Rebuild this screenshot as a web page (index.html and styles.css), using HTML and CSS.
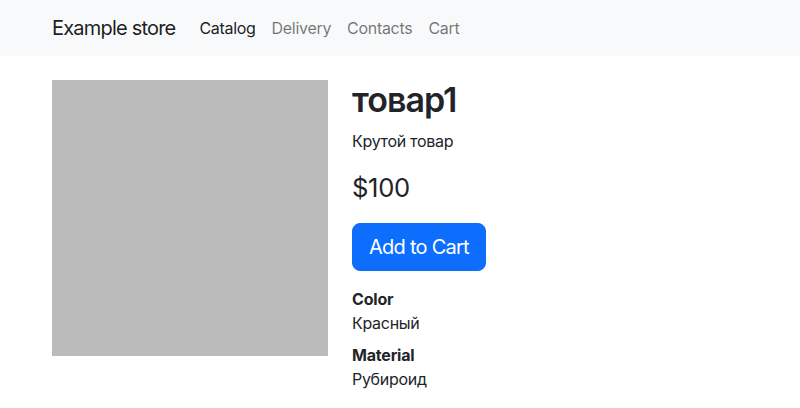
FILE: index.html
```html
<!DOCTYPE html>
<html lang="ru">
<head>
<meta charset="utf-8">
<title>Example store</title>
<link rel="stylesheet" href="styles.css">
</head>
<body>
<nav class="navbar">
  <div class="container nav-inner">
    <a class="brand" href="#">Example store</a>
    <ul class="nav">
      <li><a class="nav-link active" href="#">Catalog</a></li>
      <li><a class="nav-link" href="#">Delivery</a></li>
      <li><a class="nav-link" href="#">Contacts</a></li>
      <li><a class="nav-link" href="#">Cart</a></li>
    </ul>
  </div>
</nav>
<main class="container product">
  <div class="photo-col">
    <div class="photo"></div>
  </div>
  <div class="info-col">
    <h1 class="title">товар1</h1>
    <p class="desc">Крутой товар</p>
    <p class="price">$100</p>
    <button class="btn" type="button">Add to Cart</button>
    <dl class="props">
      <dt>Color</dt>
      <dd>Красный</dd>
      <dt>Material</dt>
      <dd>Рубироид</dd>
    </dl>
  </div>
</main>
</body>
</html>
```
FILE: styles.css
```css
* { box-sizing: border-box; }
html, body { margin: 0; padding: 0; }
body {
  font-family: Inter, "Noto Sans", "Liberation Sans", sans-serif;
  font-size: 16px;
  line-height: 1.5;
  color: #212529;
  background: #fff;
}
.container {
  width: 720px;
  margin: 0 auto;
  padding: 0 12px;
}
.navbar {
  background: #f8f9fa;
  padding: 8px 0;
}
.nav-inner {
  display: flex;
  align-items: center;
}
.brand {
  font-size: 20px;
  line-height: 30px;
  padding: 5px 0;
  margin-right: 16px;
  color: rgba(0,0,0,.9);
  text-decoration: none;
  letter-spacing: -0.8px;
}
.nav {
  display: flex;
  list-style: none;
  margin: 0;
  padding: 0;
}
.nav-link {
  display: block;
  padding: 8px 8px;
  line-height: 24px;
  color: rgba(0,0,0,.55);
  text-decoration: none;
  letter-spacing: -0.3px;
}
.nav-link.active { color: rgba(0,0,0,.9); }
.product {
  display: flex;
  margin-top: 24px;
}
.photo-col {
  flex: 0 0 300px;
  padding-right: 24px;
}
.photo {
  width: 276px;
  height: 276px;
  background: #bbbbbb;
}
.info-col { flex: 1; }
.title {
  font-size: 34px;
  line-height: 40.8px;
  font-weight: 600;
  margin: 0 0 8px;
  letter-spacing: -0.95px;
}
.desc {
  margin: 0 0 16px;
  letter-spacing: -0.3px;
}
.price {
  font-size: 25.6px;
  line-height: 38.4px;
  margin: 0 0 16px;
  letter-spacing: -0.3px;
}
.btn {
  display: block;
  font-family: inherit;
  font-size: 20px;
  line-height: 30px;
  padding: 8px 16px;
  border: 1px solid #0d6efd;
  border-radius: 8px;
  background: #0d6efd;
  color: #fff;
  margin: 0 0 16px;
  letter-spacing: -0.75px;
}
.props { margin: 0; }
.props dt { font-weight: 700; letter-spacing: -0.2px; }
.props dd { margin: 0 0 8px; letter-spacing: -0.3px; }
```
